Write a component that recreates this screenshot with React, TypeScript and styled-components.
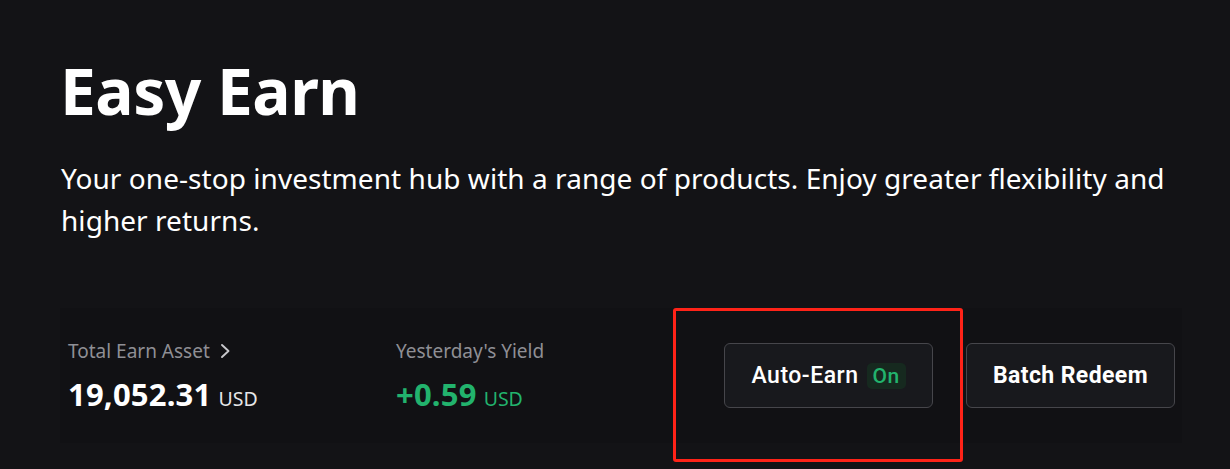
import React from "react";
import styled, { createGlobalStyle } from "styled-components";

const Global = createGlobalStyle`
  html, body { margin: 0; padding: 0; background: #131316; }
  body { font-family: "Noto Sans", "Open Sans", sans-serif; color: #fff; }
  * { box-sizing: border-box; }
`;

const Page = styled.div`
  position: relative;
  width: 1230px;
  height: 469px;
  background: #131316;
  padding: 52px 0 0 60px;
  overflow: hidden;
`;

const Title = styled.h1`
  margin: 0;
  font-size: 64px;
  line-height: 78px;
  font-weight: 700;
  letter-spacing: -0.5px;
  color: #fff;
`;

const Subtitle = styled.p`
  margin: 27px 0 0 1px;
  width: 1140px;
  font-size: 28px;
  line-height: 42px;
  font-weight: 400;
  letter-spacing: 0.05px;
  color: #fff;
`;

const Card = styled.div`
  margin-top: 67px;
  width: 1122px;
  height: 135px;
  background: #111114;
  padding: 0 7px 0 8px;
  display: flex;
  align-items: center;
`;

const Stat = styled.div`
  width: 328px;
  display: flex;
  flex-direction: column;
  gap: 12px;
`;

const Label = styled.div`
  display: flex;
  align-items: center;
  gap: 8px;
  font-size: 19px;
  line-height: 24px;
  color: #8f8f95;
`;

const Value = styled.div<{ $green?: boolean }>`
  display: flex;
  align-items: baseline;
  gap: 7px;
  color: ${(p) => (p.$green ? "#22b36d" : "#fff")};
`;

const Amount = styled.span`
  font-size: 31px;
  line-height: 38px;
  font-weight: 700;
  letter-spacing: 0.2px;
`;

const Unit = styled.span<{ $green?: boolean }>`
  font-size: 19.5px;
  color: ${(p) => (p.$green ? "#22b36d" : "#e6e6e8")};
`;

const Actions = styled.div`
  margin-left: auto;
  display: flex;
  gap: 33px;
`;

const Button = styled.button`
  width: 209px;
  height: 65px;
  background: #18191d;
  border: 1px solid #46464b;
  border-radius: 6px;
  display: flex;
  align-items: center;
  justify-content: center;
  gap: 8px;
  font-family: Roboto, sans-serif;
  font-size: 23px;
  font-weight: 500;
  letter-spacing: 0.5px;
  color: #fff;
  cursor: pointer;
`;

const BoldButton = styled(Button)`
  font-weight: 700;
  letter-spacing: 0.4px;
`;

const Badge = styled.span`
  display: inline-flex;
  align-items: center;
  justify-content: center;
  width: 39px;
  height: 26px;
  border-radius: 5px;
  background: #16291f;
  color: #22b36d;
  font-size: 21px;
  font-weight: 500;
  letter-spacing: 0.3px;
`;

const Highlight = styled.div`
  position: absolute;
  left: 673px;
  top: 308px;
  width: 290px;
  height: 154px;
  border: 3px solid #ff2318;
  border-radius: 3px;
  pointer-events: none;
`;

const Chevron = () => (
  <svg width="14" height="18" viewBox="0 0 14 18" fill="none">
    <path d="M4 3 L10.5 9 L4 15" stroke="#c8c8cc" strokeWidth="1.9" strokeLinecap="round" strokeLinejoin="round" />
  </svg>
);

export default function App() {
  return (
    <Page>
      <Global />
      <Title>Easy Earn</Title>
      <Subtitle>
        Your one-stop investment hub with a range of products. Enjoy greater flexibility and higher returns.
      </Subtitle>
      <Card>
        <Stat>
          <Label>
            Total Earn Asset <Chevron />
          </Label>
          <Value>
            <Amount>19,052.31</Amount>
            <Unit>USD</Unit>
          </Value>
        </Stat>
        <Stat>
          <Label>Yesterday's Yield</Label>
          <Value $green>
            <Amount>+0.59</Amount>
            <Unit $green>USD</Unit>
          </Value>
        </Stat>
        <Actions>
          <Button>
            Auto-Earn <Badge>On</Badge>
          </Button>
          <BoldButton>Batch Redeem</BoldButton>
        </Actions>
      </Card>
      <Highlight />
    </Page>
  );
}
